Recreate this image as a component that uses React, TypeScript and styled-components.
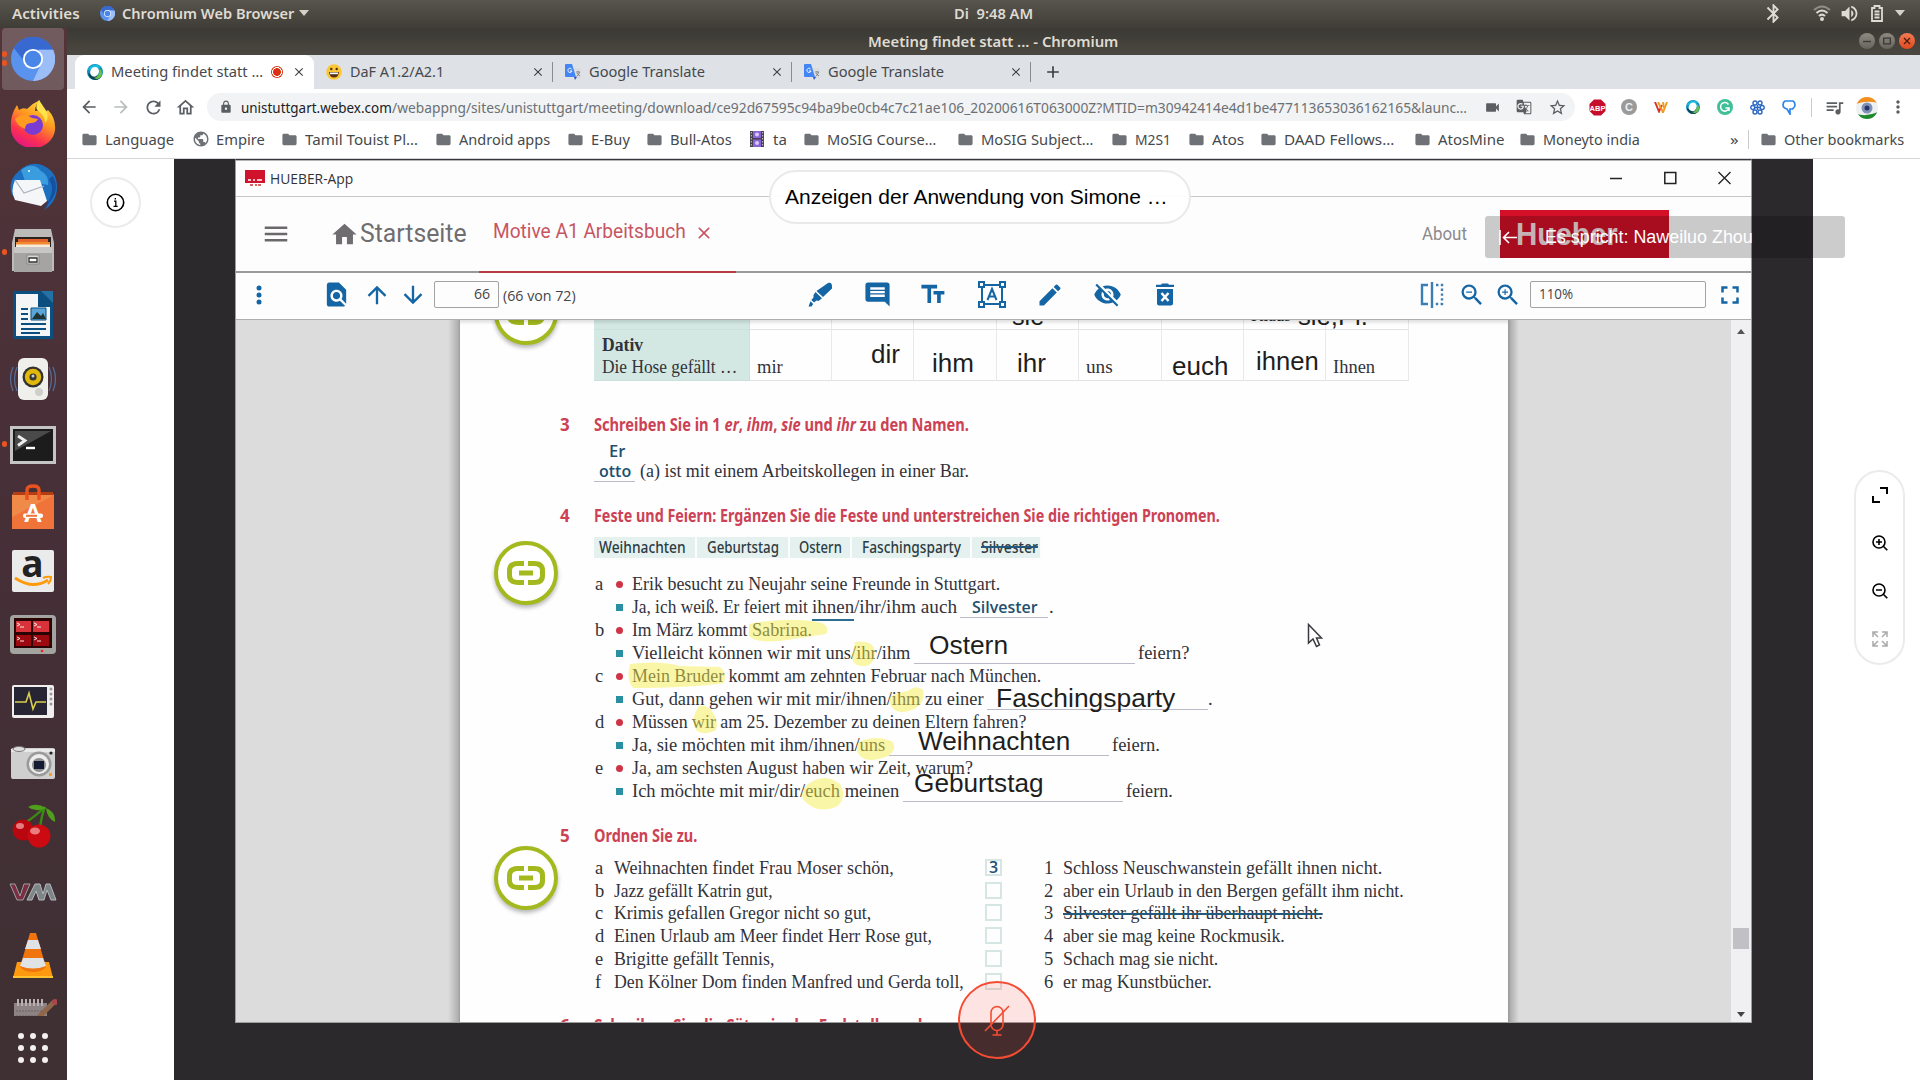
import React, { useLayoutEffect, useRef, useState, ReactNode } from 'react';
import styled, { createGlobalStyle, css } from 'styled-components';
import {
  MdHome, MdFolder, MdMenu, MdFormatSize, MdEdit, MdVisibilityOff, MdZoomOut, MdZoomIn,
  MdFullscreen, MdFindInPage, MdArrowUpward, MdArrowDownward, MdLock, MdVideocam, MdGTranslate, MdStarBorder,
  MdQueueMusic, MdPublic, MdBluetooth, MdVolumeUp, MdInsertComment, MdArrowBack, MdArrowForward, MdRefresh,
  MdOutlineHome, MdMoreVert, MdClose, MdAdd,
} from 'react-icons/md';

const ui = `'Noto Sans', 'Open Sans', sans-serif`;
const sans = `'Liberation Sans', Arial, sans-serif`;
const serif = `'Liberation Serif', 'Times New Roman', serif`;
const roboto = `Roboto, 'Liberation Sans', sans-serif`;

const Global = createGlobalStyle`
  * { box-sizing: border-box; }
  html, body { margin: 0; padding: 0; overflow: hidden; background: #fff; }
  svg { display: block; flex: none; }
`;

/* ---------- text squeezed or stretched to a set width ---------- */
const FitBox = styled.span<{ $w: number }>`
  display: inline-block;
  flex: none;
  width: ${p => p.$w}px;
  white-space: pre;
`;
const FitInner = styled.span`
  display: inline-block;
  transform-origin: 0 0;
  white-space: pre;
`;
function Fit({ w, children }: { w: number; children: ReactNode }) {
  const ref = useRef<HTMLSpanElement>(null);
  const [k, setK] = useState(1);
  useLayoutEffect(() => {
    const n = ref.current ? ref.current.offsetWidth : 0;
    if (n) setK(w / n);
  }, [w]);
  return (
    <FitBox $w={w}>
      <FitInner ref={ref} style={{ transform: `scaleX(${k})` }}>{children}</FitInner>
    </FitBox>
  );
}

/* ---------- desktop frame ---------- */
const Desktop = styled.div`
  position: relative;
  width: 1920px;
  height: 1080px;
  overflow: hidden;
  display: grid;
  grid-template: 28px 1052px / 67px 1853px;
  font-family: ${ui};
`;
const TopBar = styled.header`
  grid-column: 1 / 3;
  display: grid;
  grid-template-columns: 954px 1fr auto;
  align-items: center;
  padding-bottom: 2px;
  background: linear-gradient(#58554d, #3f3d37);
  color: #dfdbd2;
  font-size: 14.5px;
  font-weight: 600;
  line-height: 26px;
`;
const TopLeft = styled.div`
  display: flex;
  align-items: center;
  padding-left: 12px;
`;
const AppMenu = styled.div`
  display: flex;
  align-items: center;
  gap: 7px;
  margin-left: 20px;
`;
const Caret = styled.i`
  border: 5px solid transparent;
  border-top: 6px solid #d6d2c9;
  border-bottom: 0;
  margin-left: -2px;
`;
const Tray = styled.div`
  display: flex;
  align-items: center;
  padding-right: 15px;
  color: #dfdbd2;
`;
const TrayItem = styled.span<{ $ml?: number }>`
  display: flex;
  margin-left: ${p => p.$ml || 0}px;
`;

/* ---------- dock ---------- */
const Dock = styled.nav`
  position: relative;
  display: flex;
  flex-direction: column;
  background: linear-gradient(#523539, #472f38 45%, #3e3033);
`;
const DockList = styled.div`
  height: 988px;
  overflow: hidden;
  display: flex;
  flex-direction: column;
`;
const DockItem = styled.div<{ $active?: boolean; $dots?: number }>`
  flex: none;
  position: relative;
  width: 62px;
  height: 62px;
  margin: 0 0 2px 2px;
  display: grid;
  place-items: center;
  border-radius: 4px;
  background: ${p => (p.$active ? 'rgba(255,255,255,.19)' : 'none')};
  ${p => p.$dots && css`
    &::before {
      content: '';
      position: absolute;
      left: 0;
      top: ${p.$dots === 2 ? 23 : 29}px;
      width: 5px;
      height: 6px;
      border-radius: 3px;
      background: #e95420;
      box-shadow: ${p.$dots === 2 ? '0 9px #e95420' : 'none'};
    }
  `}
`;
const AppsGrid = styled.div`
  display: grid;
  grid-template-columns: repeat(3, 6px);
  gap: 6px;
  margin: 17px 0 0 18px;
`;
const AppsDot = styled.i`
  width: 6px;
  height: 6px;
  border-radius: 50%;
  background: #f4f0ee;
`;

/* ---------- browser ---------- */
const Browser = styled.section`
  display: flex;
  flex-direction: column;
  background: #fff;
`;
const TitleBar = styled.div`
  height: 27px;
  display: flex;
  align-items: center;
  background: linear-gradient(#3b3933, #4a4841);
  color: #dfdbd2;
  font-size: 14.5px;
  font-weight: 600;
  line-height: 24px;
  padding: 0 5px 2px 801px;
`;
const WinButtons = styled.div`
  margin-left: auto;
  display: flex;
  gap: 4px;
`;
const WinButton = styled.span<{ $close?: boolean }>`
  width: 16px;
  height: 16px;
  border-radius: 50%;
  display: grid;
  place-items: center;
  background: ${p => (p.$close ? 'linear-gradient(#f47b55, #e0491c)' : 'linear-gradient(#8d8a82, #66645d)')};
`;
const TabStrip = styled.div`
  height: 34px;
  display: flex;
  padding-left: 8px;
  background: #dee1e6;
`;
const Tab = styled.div<{ $active?: boolean; $sep?: boolean }>`
  width: 239px;
  display: flex;
  align-items: center;
  padding: 0 0 1px 12px;
  gap: 8px;
  color: #45494d;
  font-size: 15px;
  line-height: 32px;
  background: ${p => (p.$active ? '#fff' : 'none')};
  border-radius: ${p => (p.$active ? '9px 9px 0 0' : 0)};
  ${p => p.$sep && css`
    background: linear-gradient(#888c91, #888c91) right 0 top 7px / 1px 20px no-repeat;
  `}
`;
const TabText = styled.span`
  margin-top: -2px;
`;
const TabClose = styled.span`
  margin-left: auto;
  margin-right: 8px;
  color: #3f4347;
`;
const Record = styled.i`
  width: 12px;
  height: 12px;
  border-radius: 50%;
  background: radial-gradient(circle, #d93111 0 3.6px, #fff 4.1px 4.7px, #d93111 5.2px);
`;
const NewTab = styled.span`
  display: flex;
  align-items: center;
  padding: 0 0 1px 12px;
  color: #3c4043;
`;
const NavBar = styled.div`
  height: 36px;
  display: flex;
  align-items: center;
  padding-left: 12px;
`;
const NavButton = styled.span<{ $off?: boolean }>`
  width: 20px;
  margin-right: 12px;
  color: ${p => (p.$off ? '#babcbe' : '#5a5e62')};
`;
const Address = styled.div`
  width: 1368px;
  height: 28px;
  display: flex;
  align-items: center;
  border-radius: 14px;
  background: #f1f3f4;
  font-size: 14.5px;
  line-height: 26px;
  color: #6c7075;
  padding-left: 12px;
`;
const Domain = styled.span`
  color: #202124;
  margin-left: 8px;
`;
const AddressIcon = styled.span`
  width: 16px;
  margin-right: 16px;
  color: #5a5e62;
  display: grid;
  place-items: center;
  position: relative;
  left: 5px;
`;
const Extension = styled.span`
  width: 20px;
  height: 20px;
  margin-left: 12px;
  display: grid;
  place-items: center;
  color: #5a5e62;
`;
const Rule = styled.i<{ $ml: number }>`
  width: 1px;
  height: 19px;
  margin-left: ${p => p.$ml}px;
  background: #c8cacd;
`;
const Bookmarks = styled.div`
  height: 34px;
  display: flex;
  align-items: center;
  padding: 0 0 5px 14px;
  border-bottom: 1px solid #d3d5d8;
  font-size: 15px;
  line-height: 28px;
  color: #45494d;
`;
const Bookmark = styled.div<{ $slot: number; $ml?: number }>`
  flex: none;
  width: ${p => p.$slot}px;
  margin-left: ${p => p.$ml || 0}px;
  display: flex;
  align-items: center;
`;
const BookmarkIcon = styled.span`
  width: 15px;
  margin-right: 9px;
  display: grid;
  place-items: center;
  color: #6e7276;
`;

/* ---------- shared stage ---------- */
const Stage = styled.main`
  flex: 1;
  display: flex;
  padding-left: 107px;
`;
const Dark = styled.div`
  width: 1639px;
  background: #2b292c;
  padding-left: 61px;
`;
const AppWindow = styled.div`
  width: 1517px;
  height: 864px;
  display: flex;
  flex-direction: column;
  background: #fefdfe;
  border: 1px solid #9d9d9f;
  border-top-color: #38363a;
`;
const AppTitle = styled.div`
  height: 37px;
  display: flex;
  align-items: center;
  padding: 0 20px 1px 9px;
  border-top: 1px solid #b4b3b6;
  border-bottom: 1px solid #c6c5c7;
  font: 15px 'Open Sans', sans-serif;
  color: #333;
`;
const AppTitleText = styled.span`
  margin-left: 5px;
`;
const Spacer = styled.i`
  flex: 1;
`;
const AppWinButtons = styled.div`
  display: flex;
  gap: 41px;
`;
const AppHeader = styled.div`
  height: 76px;
  display: flex;
  align-items: center;
  border-bottom: 2px solid #9b9a9b;
  font-family: ${roboto};
  padding-left: 25px;
`;
const MenuBtn = styled.span`
  color: #6a686b;
`;
const HomeLink = styled.span`
  display: flex;
  align-items: center;
  margin-left: 39px;
  color: #6f6d70;
  font-size: 25px;
  line-height: 30px;
`;
const HomeText = styled.span`
  margin-left: 1px;
`;
const BookTab = styled.div`
  align-self: flex-start;
  height: 76px;
  width: 257px;
  margin-left: 12px;
  padding: 0 0 5px 14px;
  display: flex;
  align-items: center;
  border-bottom: 2px solid #b83a45;
  color: #c65563;
  font-size: 19.5px;
`;
const BookTabClose = styled.span`
  margin-left: 8px;
  padding-top: 2px;
`;
const About = styled.span`
  margin: 0 0 2px auto;
  color: #8a898b;
  font-size: 18px;
`;
const Logo = styled.div`
  width: 169px;
  height: 48px;
  margin: 0 82px 0 33px;
  padding-left: 16px;
  background: #d31027;
  color: #f6dfe2;
  font: bold 31px/50px ${sans};
`;
const ToolBar = styled.div`
  height: 47px;
  display: flex;
  align-items: center;
  padding-bottom: 3px;
  border-bottom: 1px solid #aeadaf;
  font: 15px 'Open Sans', sans-serif;
  color: #454447;
`;
const Tool = styled.span<{ $gap: number; $w: number; $flip?: boolean }>`
  flex: none;
  width: ${p => p.$w}px;
  margin-left: ${p => p.$gap}px;
  display: flex;
  justify-content: center;
  color: #1465a4;
  transform: ${p => (p.$flip ? 'scaleX(-1)' : 'none')};
`;
const Field = styled.span<{ $w: number; $gap: number; $right?: boolean }>`
  flex: none;
  width: ${p => p.$w}px;
  height: 27px;
  margin-left: ${p => p.$gap}px;
  padding: 0 8px;
  border: 1.5px solid #a3a2a4;
  border-radius: 2px;
  line-height: 23px;
  text-align: ${p => (p.$right ? 'right' : 'left')};
`;
const PageCount = styled.span`
  margin-left: 4px;
`;

/* ---------- document viewer ---------- */
const Viewer = styled.div`
  flex: 1;
  min-height: 0;
  display: flex;
  background: #dcdcdc;
`;
const Gutter = styled.div`
  width: 224px;
  background: linear-gradient(90deg, #dcdcdc 212px, #b0b0b0 222px, #9b9b9b);
`;
const GutterRight = styled.div`
  width: 223px;
  background: linear-gradient(90deg, #999 0, #b2b2b2 3px, #dcdcdc 11px);
`;
const Scroll = styled.div`
  width: 20px;
  display: flex;
  flex-direction: column;
  align-items: center;
  background: #f0eff2;
`;
const ScrollArrow = styled.i<{ $up?: boolean; $mt: number }>`
  margin-top: ${p => p.$mt}px;
  border: 4px solid transparent;
  ${p => (p.$up ? 'border-bottom: 5px solid #555; border-top: 0;' : 'border-top: 5px solid #444; border-bottom: 0;')}
`;
const Thumb = styled.i`
  width: 16px;
  height: 21px;
  margin-top: 594px;
  background: #c1c0c5;
`;
const Page = styled.article`
  position: relative;
  width: 1048px;
  overflow: hidden;
  background: #fefefe;
  padding-left: 134px;
  font-family: ${serif};
  font-size: 18.5px;
  color: #32323a;
`;
const TopShade = styled.div`
  position: absolute;
  inset: 0 0 auto 0;
  height: 5px;
  background: linear-gradient(rgba(0, 0, 0, .12), transparent);
`;
const Table = styled.div`
  display: grid;
  grid-template-columns: 156px 82px 82px 83px 82px 82.500px 82px 82.500px 82.500px;
  grid-template-rows: 10px 51px;
  height: 61px;
`;
const Cell = styled.div<{ $head?: boolean; $top?: boolean }>`
  border-right: 1px solid #e9e9ec;
  border-bottom: 1px solid #e1e4e6;
  padding-left: ${p => (p.$head ? 8 : 7)}px;
  padding-top: ${p => (p.$top ? 0 : p.$head ? 4 : 26)}px;
  line-height: 22px;
  white-space: nowrap;
  ${p => p.$head && css`
    background: #d3e8e2;
    border-color: #cce0db;
  `}
`;
const Bold = styled.div`
  font-weight: bold;
`;
const Heading = styled.h2<{ $mt: number }>`
  display: flex;
  height: 24px;
  margin: ${p => p.$mt}px 0 0 -34px;
  font: bold 17px/24px ${ui};
  color: #cc4254;
  white-space: nowrap;
`;
const Num = styled.span`
  width: 34px;
`;
const Hand = styled.span`
  font: 600 15.5px/22px 'Open Sans', sans-serif;
  color: #21506f;
`;
const BoxHand = styled(Hand)`
  line-height: 12px;
  font-size: 16px;
  height: 13px;
`;
const HandRow = styled.div`
  height: 22.5px;
  padding: 2.5px 0 0 15px;
  line-height: 20px;
`;
const Line = styled.div`
  height: 22.97px;
  line-height: 23px;
  white-space: nowrap;
  display: flex;
  align-items: baseline;
`;
const Letter = styled.span<{ $w: number }>`
  width: ${p => p.$w}px;
  padding-left: 1px;
`;
const Bullet = styled.i<{ $square?: boolean }>`
  width: 7px;
  height: 7px;
  margin-right: 9px;
  transform: translateY(-2px);
  border-radius: ${p => (p.$square ? 0 : '50%')};
  background: ${p => (p.$square ? '#2a8fa0' : '#cf3346')};
`;
const Blank = styled.span<{ $w: number; $l?: number; $r?: number }>`
  width: ${p => p.$w}px;
  height: 22px;
  align-self: flex-start;
  margin: 0 ${p => p.$r || 0}px 0 ${p => p.$l || 0}px;
  border-bottom: 1px solid #b9bcc8;
  text-align: center;
`;
const Under = styled.span`
  border-bottom: 2px solid #2c6d92;
`;
const Strike = styled.span`
  text-decoration: line-through;
  text-decoration-color: #24587c;
  text-decoration-thickness: 2px;
`;
const Chips = styled.div`
  display: flex;
  width: 448px;
  height: 21px;
  margin: 9px 0 15.4px;
  font: 500 15.5px/20px ${ui};
  color: #2c3c44;
`;
const Chip = styled.span<{ $w: number; $pl: number }>`
  width: ${p => p.$w}px;
  padding-left: ${p => p.$pl}px;
  background: #e5f1ee;
  border-right: 2px solid #fbfdfd;
`;
const MatchGrid = styled.div`
  display: grid;
  grid-template-columns: 391px 58px 1fr;
  grid-auto-rows: 22.96px;
  margin-top: 8.500px;
`;
const Box = styled.span`
  width: 17px;
  height: 17px;
  margin-top: 2px;
  border: 2px solid #d6e6e4;
  display: grid;
  place-items: center;
`;
const Note = styled.span<{ $x: number; $y: number }>`
  position: absolute;
  left: ${p => p.$x}px;
  top: ${p => p.$y}px;
  font: 26px/30px ${sans};
  color: #1e1e20;
`;
const SmallNote = styled(Note)`
  font: 18px/30px ${serif};
`;
const Marks = styled.svg`
  position: absolute;
  left: 0;
  top: 0;
`;
const LinkBadge = styled.span<{ $y: number }>`
  position: absolute;
  left: 34px;
  top: ${p => p.$y}px;
  width: 64px;
  height: 64px;
  border-radius: 50%;
  border: 4.5px solid #a4b91e;
  background: #fff;
  display: grid;
  place-items: center;
  box-shadow: 0 3px 4px rgba(0, 0, 0, .28);
`;
const Pointer = styled.svg`
  position: absolute;
  left: 847px;
  top: 303px;
`;

/* ---------- meeting overlays ---------- */
const InfoButton = styled.button`
  position: absolute;
  left: 90px;
  top: 177px;
  width: 51px;
  height: 51px;
  padding: 0;
  border: 2px solid #ebebeb;
  border-radius: 50%;
  background: #fff;
  display: grid;
  place-items: center;
`;
const SharePill = styled.div`
  position: absolute;
  left: 769px;
  top: 170px;
  width: 422px;
  height: 54px;
  padding-left: 14px;
  border: 2px solid #e9e9e9;
  border-radius: 27px;
  background: rgba(255, 255, 255, .95);
  font: 20.5px/50px ${sans};
  color: #000;
`;
const Speaking = styled.div`
  position: absolute;
  left: 1485px;
  top: 216px;
  width: 360px;
  height: 42px;
  display: flex;
  align-items: center;
  gap: 28px;
  padding-left: 14px;
  border-radius: 3px;
  background: rgba(0, 0, 0, .2);
  font: 19px/42px ${sans};
  color: #fff;
`;
const ViewPill = styled.div`
  position: absolute;
  left: 1854px;
  top: 470px;
  width: 51px;
  height: 195px;
  padding-top: 15px;
  display: flex;
  flex-direction: column;
  align-items: center;
  gap: 32px;
  border: 2px solid #ebebeb;
  border-radius: 26px;
  background: #fff;
`;
const MicButton = styled.button`
  position: absolute;
  left: 958px;
  top: 981px;
  width: 78px;
  height: 78px;
  padding: 0;
  border: 2px solid #f64c34;
  border-radius: 50%;
  background: rgba(248, 66, 58, .14);
  display: grid;
  place-items: center;
`;

/* ---------- drawings ---------- */
const Chromium = ({ s }: { s: number }) => (
  <svg width={s} height={s} viewBox="0 0 48 48">
    <circle cx="24" cy="24" r="24" fill="#5a93ee" />
    <path d="M3 12A24 24 0 0 1 46 14H24A10 10 0 0 0 14 26Z" fill="#3869d1" />
    <path d="M46 14A24 24 0 0 1 24 48L33 29Q36 20 30 14Z" fill="#9bbdf8" />
    <circle cx="24" cy="24" r="11" fill="#fff" /><circle cx="24" cy="24" r="9" fill="#4a86e8" />
  </svg>
);
const Webex = ({ s = 16 }: { s?: number }) => (
  <svg width={s} height={s} viewBox="0 0 16 16">
    <circle cx="8" cy="8" r="8" fill="#0d8fbd" />
    <path d="M1 6A8 8 0 0 1 14 3L9 5Z" fill="#19bbe0" />
    <path d="M1 9Q2 15 8 16 13 16 15 11L8 12Z" fill="#0a4454" />
    <path d="M7 14Q13 13 12.500 4 17 9 13.500 13.500 11 16 7 14Z" fill="#6cc04a" />
    <ellipse cx="7.600" cy="7.800" rx="4.300" ry="5" transform="rotate(25 7.600 7.800)" fill="#fff" />
  </svg>
);
const Smile = () => (
  <svg width="16" height="16" viewBox="0 0 16 16">
    <circle cx="8" cy="8" r="7.8" fill="#fcc737" /><path d="M3 8h10q-.5 5.500-5 5.500T3 8Z" fill="#533116" />
    <path d="M4 8.500h8v1.700H4Z" fill="#fff" /><circle cx="5.300" cy="5" r="1.200" fill="#533116" /><circle cx="10.700" cy="5" r="1.200" fill="#533116" />
  </svg>
);
const GTrans = () => (
  <svg width="16" height="16" viewBox="0 0 16 16">
    <path d="M6 4h9a1 1 0 0 1 1 1v10H10Z" fill="#dadce0" /><path d="M9 13h3l-2 3Z" fill="#3454c4" />
    <path d="M1 0h6l4 13H1a1 1 0 0 1-1-1V1a1 1 0 0 1 1-1Z" fill="#4285f4" />
    <path d="M6.800 5.300A2.100 2.100 0 1 0 7 7H5" fill="none" stroke="#fff" strokeWidth="1" />
    <path d="M11 8h4M13 7v1m1.500 0q-.5 3-3 4.500M12 9q1 2 3 3" stroke="#777" strokeWidth=".8" fill="none" />
  </svg>
);
const Film = () => (
  <svg width="14" height="16" viewBox="0 0 14 16">
    <path d="M0 0h14v16H0Z" fill="#46424e" /><path d="M3 0h8v7H3Zm0 8.500h8V16H3Z" fill="#8a63d8" />
    <circle cx="7" cy="3.500" r="2" fill="#d9c9fa" /><circle cx="7" cy="12" r="2" fill="#d9c9fa" />
    <path d="M1.300 1v15M12.700 1v15" stroke="#ccc" strokeDasharray="1.500 1.500" />
  </svg>
);
const Wifi = () => (
  <svg width="18" height="16" viewBox="0 0 18 16" fill="none" stroke="#dfdbd2" strokeWidth="2">
    <path d="M1 5q8-7 16 0" opacity=".45" /><path d="M3.500 8q5.500-5 11 0M6 11q3-2.800 6 0" /><circle cx="9" cy="14" r="1" fill="#dfdbd2" />
  </svg>
);
const Battery = () => (
  <svg width="12" height="17" viewBox="0 0 12 17"><path d="M1 3h2.500V1h5v2H11v13H1ZM3.500 6.500h5m-5 3h5m-5 3h5" fill="none" stroke="#dfdbd2" strokeWidth="1.800" /></svg>
);
const ScreenFile = () => (
  <svg width="20" height="17" viewBox="0 0 20 17"><path d="M0 0h20v13H0Z" fill="#d0122c" /><path d="M3 10h3m2 0h2m2 0h5" stroke="#fff" strokeWidth="1.400" /><path d="M5 15h3m2 0h2m1 0h3" stroke="#c33" strokeWidth="1.600" /></svg>
);
const LinkShape = () => (
  <svg width="38" height="24" viewBox="0 0 38 24" fill="none" stroke="#a4b91e" strokeWidth="5">
    <path d="M17 2.500H11Q2.500 2.500 2.500 9.500V14.500Q2.500 21.500 11 21.500H17M21 2.500H27Q35.500 2.500 35.500 9.500V14.500Q35.500 21.500 27 21.500H21M12 12H26" />
  </svg>
);
const Marker = () => (
  <svg width="25" height="25" viewBox="0 0 25 25" fill="#1465a4">
    <path d="M20 1q4-1.500 4 3.500v2L15 15 8.500 9ZM7.500 10l6.500 6.200L10.500 19 8.500 18.500 6 20.500 3.300 18 5.500 15.500V13ZM2.500 19.300 5.200 22 3.500 24.500H.5Z" />
  </svg>
);
const TextBox = () => (
  <svg width="28" height="27" viewBox="0 0 28 27" fill="none" stroke="#1465a4" strokeWidth="2">
    <path d="M4 4h20v19H4Z" /><path d="M1 1h5v5H1ZM22 1h5v5h-5ZM1 21h5v5H1ZM22 21h5v5h-5Z" fill="#fff" />
    <path d="M9.500 19 14 8l4.500 11M11 15.500h6" />
  </svg>
);
const TrashX = () => (
  <svg width="18" height="23" viewBox="0 0 18 23"><path d="M1 6h16v14.500a2 2 0 0 1-2 2H3a2 2 0 0 1-2-2ZM0 1.800h5L6 .5h6l1 1.300h5V4H0Z" fill="#1465a4" /><path d="m5.500 10 7 8m0-8-7 8" stroke="#fff" strokeWidth="2.500" /></svg>
);
const BookSplit = () => (
  <svg width="24" height="26" viewBox="0 0 24 26" fill="none" stroke="#3b7eb3" strokeWidth="2.400">
    <path d="M8 3H2v19h6M12 0v26" /><path d="M16 3h6v19h-7" strokeDasharray="2.400 2.400" />
  </svg>
);

const DockSvg = ({ children }: { children: ReactNode }) => (
  <svg width="48" height="48" viewBox="0 0 48 48">{children}</svg>
);
const Firefox = () => (
  <DockSvg>
    <defs><linearGradient id="ff" x1=".8" y1="0" x2=".3" y2="1"><stop offset="0" stopColor="#ffe83e" /><stop offset=".4" stopColor="#ff9a1f" /><stop offset=".75" stopColor="#fb3150" /><stop offset="1" stopColor="#e31587" /></linearGradient></defs>
    <path d="M31 1q-5 5-5 11 3-1 8 3l5-4q8 8 7 20A22 20 0 0 1 2 27Q1 17 8 6l2 5q4-3 8-1Q24 4 31 1Z" fill="url(#ff)" />
    <circle cx="24" cy="26" r="10" fill="#7a3bd3" /><path d="M6 20q8-8 17-1l6 1q-2 4-7 4-6 0-6 6Q8 27 6 20Z" fill="#ff9b20" />
    <path d="M30 1q-5 7-1 11 7 4 7 12 4-4 2-11Z" fill="#ffe34a" />
  </DockSvg>
);
const Thunderbird = () => (
  <DockSvg>
    <path d="M10 8Q20-2 33 2q15 6 15 22 0 15-13 23 5-5 4-9L3 32Q-2 18 10 8Z" fill="#1d6fc0" />
    <path d="M12 7Q24-2 32 8q8 4 7 14L16 18Z" fill="#3a9de0" />
    <path d="M6 17 31 17 38 38 32 43 6 37Q1 28 6 17Z" fill="#f4f6f8" /><path d="M6 17 15 30 35 23" fill="none" stroke="#aab4c0" strokeWidth="1.200" />
    <path d="M40 16q8 12-5 29 18-15 9-32Z" fill="#1451a0" /><circle cx="20" cy="8" r="1" fill="#fff" />
  </DockSvg>
);
const Files = () => (
  <DockSvg>
    <path d="M6 2h36l3 14v28H3V16Z" fill="#bdbbb8" /><path d="M6 10h36v11H6Z" fill="#2a221e" /><path d="M9 12h30v8H9Z" fill="#e2642a" /><path d="M7 16h34v5H7Z" fill="#f7ead8" /><path d="M7 15h34v2.500H7Z" fill="#f28a30" />
    <path d="M5 20h38v25H5Z" fill="#a5a4a3" /><path d="M5 20h38v6H5Z" fill="#c7c6c5" /><path d="M18 28h12v9H18Z" fill="#d9d8d7" stroke="#888" /><path d="M20 31h8v4h-8Z" fill="#fff" stroke="#333" strokeWidth="1.300" />
  </DockSvg>
);
const Writer = () => (
  <DockSvg>
    <path d="M4 0h28l12 12v36H4Z" fill="#0b4f80" /><path d="M32 0h12v12Z" fill="#2272a8" /><path d="M7 3h22v13h12v29H7Z" fill="#f3f5f6" />
    <path d="M12 18h7m-7 5h7m-7 5h7m-7 5h25m-25 5h25m-25 4h19" stroke="#0b4f80" strokeWidth="2" /><path d="M22 17h15v12H22Z" fill="#5aa6d8" stroke="#0b4f80" /><path d="m23 28 5-7 4 4 2-3 3 6Z" fill="#233" />
  </DockSvg>
);
const Rhythm = () => (
  <DockSvg>
    <path d="M4 12q-5 12 0 24M44 12q5 12 0 24M8 12q-5 12 0 24M40 12q5 12 0 24" fill="none" stroke="#566c94" strokeWidth="1.300" />
    <rect x="9" y="3" width="30" height="42" rx="6" fill="#efefec" /><circle cx="24" cy="22" r="10.500" fill="#33322e" /><circle cx="24" cy="22" r="8.200" fill="#e0b90c" /><circle cx="24" cy="22" r="3.600" fill="#3a3936" /><circle cx="24" cy="21" r="1.500" fill="#ccc" /><circle cx="30" cy="37" r="4" fill="#cfcfca" />
  </DockSvg>
);
const Terminal = () => (
  <DockSvg><path d="M1 7h46v38H1Z" fill="#c4c4c4" /><path d="M4 10h40v32H4Z" fill="#1c1c1c" /><path d="M6 12h36L6 32Z" fill="#4a4a4a" /><path d="m9 17 7 4.500-7 5" fill="none" stroke="#eee" strokeWidth="2.800" /><path d="M17 29h9" stroke="#fff" strokeWidth="2.400" /></DockSvg>
);
const Software = () => (
  <DockSvg>
    <path d="m3 12 3-3h37l2 3v34H3Z" fill="#f0743a" /><path d="M4 9h40v4H4Z" fill="#b63c12" /><path d="M3 12h42L3 34Z" fill="#f08a48" /><path d="M18 17V7q0-4 6-4t6 4v10" fill="none" stroke="#e8521e" strokeWidth="3.400" />
    <text x="24" y="39" textAnchor="middle" fontFamily="Lato" fontWeight="900" fontSize="24" fill="#fff">A</text><rect x="14" y="30.500" width="20" height="4.600" rx="2" fill="#fff" /><path d="M17 32.800h11" stroke="#f0743a" strokeWidth="2" />
  </DockSvg>
);
const Amazon = () => (
  <DockSvg>
    <rect x="3" y="3" width="42" height="42" rx="2" fill="#ebebec" /><text x="23.500" y="30" textAnchor="middle" fontFamily="Open Sans" fontWeight="700" fontSize="37" fill="#222">a</text>
    <path d="M6 31q18 12 33 2" fill="none" stroke="#ff9a0b" strokeWidth="2.800" /><path d="M34 31q4-2 8-1-0 4-3 7" fill="none" stroke="#ff9a0b" strokeWidth="2" />
  </DockSvg>
);
const Terminator = () => (
  <DockSvg>
    <rect x="1" y="4" width="46" height="39" rx="4" fill="#a3a49f" /><path d="M5 7h38v30H5Z" fill="#2a0405" /><path d="M7 10h15v11H7Zm17 0h16v11H24Z" fill="#d8323a" /><path d="M7 24h15v11H7Zm17 0h16v11H24Z" fill="#9c0a10" />
    <path d="m8 12 3 1.500-3 1.500m3 1h4m10-4 3 1.500-3 1.500m3 1h4M8 26l3 1.500L8 29m3 1h4m10-4 3 1.500-3 1.500m3 1h4" fill="none" stroke="#fff" strokeWidth=".9" /><circle cx="33" cy="40" r="1.300" fill="#e22" />
  </DockSvg>
);
const Monitor = () => (
  <DockSvg><rect x="3" y="10" width="42" height="33" rx="2" fill="#f0efee" /><path d="M5 12h33v28H5Z" fill="#272433" /><path d="M6 27h11l3-9 4 16 3-7h10" fill="none" stroke="#d7cf4a" strokeWidth="1.600" /><circle cx="42" cy="14" r="1.500" fill="#999" /><circle cx="42" cy="19" r="1.500" fill="#999" /><circle cx="42" cy="24" r="1.500" fill="#999" /><circle cx="42" cy="29" r="1.500" fill="#999" /></DockSvg>
);
const Camera = () => (
  <DockSvg><rect x="2" y="9" width="44" height="31" rx="2" fill="#cfcfcf" /><path d="M2 13h44v-3H2Z" fill="#e9e9e9" /><ellipse cx="10" cy="10" rx="6" ry="2.500" fill="#ddd" stroke="#777" /><circle cx="30" cy="25" r="12.500" fill="#9a9a9a" /><circle cx="30" cy="25" r="10" fill="#ededed" /><circle cx="30" cy="26" r="7" fill="#8d8d8d" /><rect x="25" y="22" width="10" height="8" fill="#131a33" /><circle cx="42" cy="14" r="1.600" fill="#222" /><path d="M40 34h3v3h-3Z" fill="#f3a12c" /></DockSvg>
);
const Cherry = () => (
  <DockSvg>
    <path d="M16 20Q28 12 36 4q-4 10-5 22" fill="none" stroke="#3b8a12" strokeWidth="2.400" /><path d="M37 5Q27-1 19 4q8 6 18 1Zm0 0q10 4 9 14-8-4-9-14Z" fill="#4f9f1b" />
    <circle cx="14" cy="27" r="10.500" fill="#b9070f" /><circle cx="30" cy="33" r="11.500" fill="#cb0a12" /><ellipse cx="11" cy="23" rx="4" ry="3" fill="#f29a9a" opacity=".8" /><ellipse cx="26" cy="28" rx="5" ry="3.500" fill="#f29a9a" opacity=".8" />
  </DockSvg>
);
const Vmm = () => (
  <DockSvg>
    <path d="M1 17h5l5 12 4-12h6l-7 16H8Z" fill="#7d2d43" stroke="#9aa0a3" strokeWidth="1" />
    <path d="m18 33 8-16h5l3 10 3-10h4l6 16h-5l-4-10-3 10h-5l-3-9-4 9Z" fill="#7e8588" stroke="#b3b8ba" strokeWidth="1" />
  </DockSvg>
);
const Vlc = () => (
  <DockSvg>
    <path d="M8 31h32l4 16H4Z" fill="#ff9a10" /><path d="M4 45h40v2H4Z" fill="#ffc32e" /><path d="m21 2h6l10 34q-4 5-13 5t-13-5Z" fill="#f0750f" /><path d="M19 9h10l3 9H16Zm-5 18h20l3 8q-13 5-26 0Z" fill="#dfe3e6" />
  </DockSvg>
);
const Notes = () => (
  <DockSvg><path d="M5 8h33v30H5Z" fill="#8d8385" /><path d="M7 16h28M7 21h28" stroke="#6d6365" strokeDasharray="2 1" /><path d="M9 4v7m4-7v7m4-7v7m4-7v7m4-7v7m4-7v7m4-7v7" stroke="#b8b0b2" strokeWidth="2" /><path d="m45 7-15 15" stroke="#8f6648" strokeWidth="5" /><circle cx="46" cy="7" r="3" fill="#a8474b" /></DockSvg>
);

const dock: { icon: ReactNode; dots?: number; active?: boolean }[] = [
  { icon: <Chromium s={44} />, dots: 2, active: true }, { icon: <Firefox /> }, { icon: <Thunderbird /> }, { icon: <Files />, dots: 1 },
  { icon: <Writer /> }, { icon: <Rhythm /> }, { icon: <Terminal />, dots: 1 }, { icon: <Software /> }, { icon: <Amazon /> },
  { icon: <Terminator /> }, { icon: <Monitor /> }, { icon: <Camera /> }, { icon: <Cherry /> }, { icon: <Vmm /> }, { icon: <Vlc /> }, { icon: <Notes /> },
];

const bookmarks: [string, number, number, ReactNode?][] = [
  ['Language', 69, 111], ['Empire', 49, 89, <MdPublic size={18} />], ['Tamil Touist Pl…', 113, 154], ['Android apps', 91, 132],
  ['E-Buy', 39, 79], ['Bull-Atos', 62, 103], ['ta', 14, 54, <Film />], ['MoSIG Course…', 109, 154], ['MoSIG Subject…', 112, 154],
  ['M2S1', 36, 77], ['Atos', 32, 72], ['DAAD Fellows…', 110, 154], ['AtosMine', 66, 105], ['Moneyto india', 97, 211],
];

const matches: [string, string, number, string, number][] = [
  ['a', 'Weihnachten findet Frau Moser schön,', 280, 'Schloss Neuschwanstein gefällt ihnen nicht.', 319],
  ['b', 'Jazz gefällt Katrin gut,', 159, 'aber ein Urlaub in den Bergen gefällt ihm nicht.', 341],
  ['c', 'Krimis gefallen Gregor nicht so gut,', 257, 'Silvester gefällt ihr überhaupt nicht.', 260],
  ['d', 'Einen Urlaub am Meer findet Herr Rose gut,', 318, 'aber sie mag keine Rockmusik.', 222],
  ['e', 'Brigitte gefällt Tennis,', 160, 'Schach mag sie nicht.', 155],
  ['f', 'Den Kölner Dom finden Manfred und Gerda toll,', 350, 'er mag Kunstbücher.', 149],
];

const notes: [string, number, number, number][] = [
  ['sie', 552, -19, 32], ['sie,Pl.', 838, -19, 70], ['dir', 411, 19, 29], ['ihm', 472, 27.5, 42], ['ihr', 557, 28, 29],
  ['euch', 712, 30.5, 56], ['ihnen', 796, 26, 63], ['Ostern', 469, 310, 79], ['Faschingsparty', 536, 363, 179],
  ['Weihnachten', 458, 406, 152], ['Geburtstag', 454, 448, 130],
];

function Q({ letter, children }: { letter?: string; children: ReactNode }) {
  return (
    <Line>
      <Letter $w={22}>{letter || ''}</Letter>
      <Bullet $square={!letter} />
      {children}
    </Line>
  );
}

function Worksheet() {
  return (
    <Page>
      <Table>
        <Cell $head $top />{[1, 2, 3, 4, 5, 6, 7, 8].map(i => <Cell key={i} $top />)}
        <Cell $head><Bold><Fit w={41}>Dativ</Fit></Bold><Fit w={135}>Die Hose gefällt …</Fit></Cell>
        <Cell><Fit w={26}>mir</Fit></Cell><Cell /><Cell /><Cell />
        <Cell><Fit w={27}>uns</Fit></Cell><Cell /><Cell /><Cell><Fit w={42}>Ihnen</Fit></Cell>
      </Table>

      <Heading $mt={32}><Num>3</Num><Fit w={375}>Schreiben Sie in 1 <em>er</em>, <em>ihm</em>, <em>sie</em> und <em>ihr</em> zu den Namen.</Fit></Heading>
      <HandRow><Hand><Fit w={16}>Er</Fit></Hand></HandRow>
      <Line><Blank $w={41} $r={5}><Hand><Fit w={32}>otto</Fit></Hand></Blank><Fit w={329}>(a) ist mit einem Arbeitskollegen in einer Bar.</Fit></Line>

      <Heading $mt={21.5}><Num>4</Num><Fit w={626}>Feste und Feiern: Ergänzen Sie die Feste und unterstreichen Sie die richtigen Pronomen.</Fit></Heading>
      <Chips>
        <Chip $w={103} $pl={5}><Fit w={87}>Weihnachten</Fit></Chip>
        <Chip $w={93} $pl={10}><Fit w={72}>Geburtstag</Fit></Chip>
        <Chip $w={62} $pl={9}><Fit w={43}>Ostern</Fit></Chip>
        <Chip $w={120} $pl={10}><Fit w={99}>Faschingsparty</Fit></Chip>
        <Chip $w={70} $pl={9}><Fit w={57}><Strike>Silvester</Strike></Fit></Chip>
      </Chips>

      <Q letter="a"><Fit w={368}>Erik besucht zu Neujahr seine Freunde in Stuttgart.</Fit></Q>
      <Q>
        <Fit w={180}>Ja, ich weiß. Er feiert mit </Fit><Under><Fit w={42}>ihnen</Fit></Under><Fit w={103}>/ihr/ihm auch</Fit>
        <Blank $w={88} $l={3} $r={1}><Hand><Fit w={66}>Silvester</Fit></Hand></Blank>.
      </Q>
      <Q letter="b"><Fit w={120}>Im März kommt </Fit><Fit w={60}>Sabrina.</Fit></Q>
      <Q><Fit w={278}>Vielleicht können wir mit uns/ihr/ihm</Fit><Blank $w={221} $l={4} $r={3} /><Fit w={51}>feiern?</Fit></Q>
      <Q letter="c"><Fit w={409}>Mein Bruder kommt am zehnten Februar nach München.</Fit></Q>
      <Q><Fit w={352}>Gut, dann gehen wir mit mir/ihnen/ihm zu einer</Fit><Blank $w={221} $l={3} />.</Q>
      <Q letter="d"><Fit w={394}>Müssen wir am 25. Dezember zu deinen Eltern fahren?</Fit></Q>
      <Q><Fit w={253}>Ja, sie möchten mit ihm/ihnen/uns</Fit><Blank $w={220} $l={4} $r={3} /><Fit w={48}>feiern.</Fit></Q>
      <Q letter="e"><Fit w={341}>Ja, am sechsten August haben wir Zeit, warum?</Fit></Q>
      <Q><Fit w={267}>Ich möchte mit mir/dir/euch meinen</Fit><Blank $w={220} $l={4} $r={3} /><Fit w={47}>feiern.</Fit></Q>

      <Heading $mt={21}><Num>5</Num><Fit w={103}>Ordnen Sie zu.</Fit></Heading>
      <MatchGrid>
        {matches.map(([l, left, lw, right, rw], i) => (
          <React.Fragment key={l}>
            <Line><Letter $w={20}>{l}</Letter><Fit w={lw}>{left}</Fit></Line>
            <Box>{i === 0 && <BoxHand>3</BoxHand>}</Box>
            <Line><Letter $w={20}>{i + 1}</Letter><Fit w={rw}>{i === 2 ? <Strike>{right}</Strike> : right}</Fit></Line>
          </React.Fragment>
        ))}
      </MatchGrid>
      <Heading $mt={20}><Num>6</Num><Fit w={345}>Schreiben Sie die Sätze in der Endstellung des</Fit></Heading>

      <Marks width="1048" height="702" viewBox="460 320 1048 702" fill="#f6ee46" fillOpacity=".47">
        <path d="M749 624Q790 616 822 623 830 627 826 634 800 638 780 641 755 643 749 636Z" />
        <path d="M855 642Q870 640 874 648 877 663 866 666 852 667 852 656Z" />
        <path d="M630 664Q660 660 680 666L720 667Q727 672 724 683 690 688 633 688 626 680 630 664Z" />
        <path d="M889 701Q888 694 908 691 916 684 923 690 926 704 912 710 893 717 889 701Z" />
        <path d="M698 707Q707 703 713 713 719 722 716 730 706 736 697 731 691 722 694 716Z" />
        <path d="M859 742Q876 734 893 742 897 750 888 756 868 764 860 756 854 748 859 742Z" />
        <path d="M808 784Q825 772 840 784 847 796 838 806 820 814 808 804 796 796 808 784Z" />
      </Marks>
      {notes.map(([t, x, y, w]) => <Note key={t} $x={x} $y={y}><Fit w={w}>{t}</Fit></Note>)}
      <SmallNote $x={791} $y={-20}><Fit w={40}>Klaus</Fit></SmallNote>
      <LinkBadge $y={-39}><LinkShape /></LinkBadge>
      <LinkBadge $y={221}><LinkShape /></LinkBadge>
      <LinkBadge $y={526}><LinkShape /></LinkBadge>
      <Pointer width="16" height="26" viewBox="0 0 16 26"><path d="M1.500 1.500V20L6 16l3.500 7.500 3-1.500L9.500 15H14.500Z" fill="#fff" stroke="#3b3a40" strokeWidth="1.500" /></Pointer>
      <TopShade />
    </Page>
  );
}

export default function App() {
  return (
    <Desktop>
      <Global />
      <TopBar>
        <TopLeft>
          <Fit w={68}>Activities</Fit>
          <AppMenu><Chromium s={15} /><Fit w={172}>Chromium Web Browser</Fit><Caret /></AppMenu>
        </TopLeft>
        <Fit w={79}>Di  9:48 AM</Fit>
        <Tray>
          <TrayItem><MdBluetooth size={23} /></TrayItem>
          <TrayItem $ml={28}><Wifi /></TrayItem>
          <TrayItem $ml={8}><MdVolumeUp size={21} /></TrayItem>
          <TrayItem $ml={11}><Battery /></TrayItem>
          <TrayItem $ml={14}><Caret /></TrayItem>
        </Tray>
      </TopBar>

      <Dock>
        <DockList>
          {dock.map((d, i) => <DockItem key={i} $dots={d.dots} $active={d.active}>{d.icon}</DockItem>)}
        </DockList>
        <AppsGrid>{Array.from({ length: 9 }, (_, i) => <AppsDot key={i} />)}</AppsGrid>
      </Dock>

      <Browser>
        <TitleBar>
          <Fit w={250}>Meeting findet statt ... - Chromium</Fit>
          <WinButtons>
            <WinButton><svg width="8" height="8"><path d="M0 4.500h8" stroke="#3b3933" strokeWidth="1.300" /></svg></WinButton>
            <WinButton><svg width="8" height="8"><path d="M.7 1.200h6.600v5.600H.7Z" fill="none" stroke="#3b3933" strokeWidth="1.300" /></svg></WinButton>
            <WinButton $close><svg width="8" height="8"><path d="m1 1 6 6m0-6L1 7" stroke="#4a1d0d" strokeWidth="1.300" /></svg></WinButton>
          </WinButtons>
        </TitleBar>
        <TabStrip>
          <Tab $active><Webex /><TabText><Fit w={152}>Meeting findet statt …</Fit></TabText><Record /><TabClose><MdClose size={14} /></TabClose></Tab>
          <Tab $sep><Smile /><TabText><Fit w={94}>DaF A1.2/A2.1</Fit></TabText><TabClose><MdClose size={14} /></TabClose></Tab>
          <Tab $sep><GTrans /><TabText><Fit w={116}>Google Translate</Fit></TabText><TabClose><MdClose size={14} /></TabClose></Tab>
          <Tab $sep><GTrans /><TabText><Fit w={116}>Google Translate</Fit></TabText><TabClose><MdClose size={14} /></TabClose></Tab>
          <NewTab><MdAdd size={20} /></NewTab>
        </TabStrip>
        <NavBar>
          <NavButton><MdArrowBack size={20} /></NavButton>
          <NavButton $off><MdArrowForward size={20} /></NavButton>
          <NavButton><MdRefresh size={21} /></NavButton>
          <NavButton><MdOutlineHome size={21} /></NavButton>
          <Address>
            <MdLock size={14} color="#5a5e62" />
            <Domain><Fit w={151}>unistuttgart.webex.com</Fit></Domain>
            <Fit w={1075}>/webappng/sites/unistuttgart/meeting/download/ce92d67595c94ba9be0cb4c7c21ae106_20200616T063000Z?MTID=m30942414e4d1be477113653036162165&amp;launc…</Fit>
            <Spacer />
            <AddressIcon><MdVideocam size={17} /></AddressIcon>
            <AddressIcon><MdGTranslate size={16} /></AddressIcon>
            <AddressIcon><MdStarBorder size={19} /></AddressIcon>
          </Address>
          <Extension><svg width="17" height="17" viewBox="0 0 17 17"><path d="M5 .5h7L16.500 5v7L12 16.500H5L.5 12V5Z" fill="#c70d2c" /><text x="8.500" y="11.500" textAnchor="middle" fontFamily="Liberation Sans" fontSize="7.500" fontWeight="bold" fill="#fff">ABP</text></svg></Extension>
          <Extension><svg width="16" height="16" viewBox="0 0 16 16"><circle cx="8" cy="8" r="8" fill="#9a9a9a" /><text x="8" y="12" textAnchor="middle" fontFamily="Liberation Sans" fontSize="11" fontWeight="bold" fill="#eee">C</text></svg></Extension>
          <Extension><svg width="14" height="11" viewBox="0 0 14 11" fill="none" strokeWidth="1.900"><path d="m1 0 4 9.500L8 3" stroke="#d93025" /><path d="M4 0l3 6" stroke="#f29a1f" /><path d="m9 0 1 6" stroke="#f29a1f" /><path d="M13 0 9 10.500 7 6" stroke="#f29a1f" /></svg></Extension>
          <Extension><Webex s={14} /></Extension>
          <Extension><svg width="16" height="16" viewBox="0 0 16 16"><circle cx="8" cy="8" r="8" fill="#3fbf97" /><path d="M11.500 5.500A4.300 4.300 0 1 0 12 9H8.500M12 8.500V12" fill="none" stroke="#fff" strokeWidth="1.500" /></svg></Extension>
          <Extension><svg width="15" height="15" viewBox="0 0 15 15" fill="none" stroke="#2b67c4" strokeWidth="1.400"><circle cx="5" cy="3" r="2" /><circle cx="10" cy="3" r="2" /><circle cx="2.800" cy="7.500" r="2" /><circle cx="12.200" cy="7.500" r="2" /><circle cx="5" cy="12" r="2" /><circle cx="10" cy="12" r="2" /><path d="M7.500 5v5M5 7.500h5" /></svg></Extension>
          <Extension><svg width="14" height="15" viewBox="0 0 14 15" fill="none" stroke="#2c84ea" strokeWidth="1.700"><path d="M3 1h8q2 1 2 4 0 2-2.500 4H8v5L5 9Q1 8 1 5 1 2 3 1Z" /></svg></Extension>
          <Rule $ml={12} />
          <Extension><MdQueueMusic size={21} /></Extension>
          <Extension><svg width="22" height="22" viewBox="0 0 22 22"><clipPath id="av"><circle cx="11" cy="11" r="11" /></clipPath><g clipPath="url(#av)"><path d="M0 0h22v22H0Z" fill="#eef0f2" /><path d="M0 0h22v6Q11 3 0 7Z" fill="#f58f1c" /><path d="M0 17q11 3 22-2v7H0Z" fill="#1f8a2b" /><circle cx="11" cy="11" r="5.500" fill="#8193b5" /><circle cx="11" cy="11" r="2.500" fill="#26346b" /></g></svg></Extension>
          <Extension><MdMoreVert size={20} /></Extension>
        </NavBar>
        <Bookmarks>
          {bookmarks.map(([label, w, slot, icon]) => (
            <Bookmark key={label} $slot={slot}><BookmarkIcon>{icon || <MdFolder size={17} />}</BookmarkIcon><Fit w={w}>{label}</Fit></Bookmark>
          ))}
          <Fit w={9}>»</Fit>
          <Rule $ml={9} />
          <Bookmark $slot={145} $ml={11}><BookmarkIcon><MdFolder size={17} /></BookmarkIcon><Fit w={120}>Other bookmarks</Fit></Bookmark>
        </Bookmarks>

        <Stage>
          <Dark>
            <AppWindow>
              <AppTitle>
                <ScreenFile />
                <AppTitleText><Fit w={83}>HUEBER-App</Fit></AppTitleText>
                <Spacer />
                <AppWinButtons>
                  <svg width="13" height="14"><path d="M0 7.500h12" stroke="#222" strokeWidth="1.500" /></svg>
                  <svg width="13" height="14"><path d="M.8 1.500h11v11H.8Z" fill="none" stroke="#222" strokeWidth="1.500" /></svg>
                  <svg width="13" height="14"><path d="m.5 1 12 12m0-12-12 12" stroke="#222" strokeWidth="1.300" /></svg>
                </AppWinButtons>
              </AppTitle>
              <AppHeader>
                <MenuBtn><MdMenu size={30} /></MenuBtn>
                <HomeLink><MdHome size={29} /><HomeText><Fit w={107}>Startseite</Fit></HomeText></HomeLink>
                <BookTab><Fit w={193}>Motive A1 Arbeitsbuch</Fit><BookTabClose><MdClose size={20} /></BookTabClose></BookTab>
                <About><Fit w={45}>About</Fit></About>
                <Logo><Fit w={102}>Hueber</Fit></Logo>
              </AppHeader>
              <ToolBar>
                <Tool $gap={8} $w={30}><svg width="6" height="20"><g fill="#1465a4"><circle cx="3" cy="3" r="2.500" /><circle cx="3" cy="10" r="2.500" /><circle cx="3" cy="17" r="2.500" /></g></svg></Tool>
                <Tool $gap={47} $w={30}><MdFindInPage size={29} /></Tool>
                <Tool $gap={11} $w={30}><MdArrowUpward size={28} /></Tool>
                <Tool $gap={6} $w={30}><MdArrowDownward size={28} /></Tool>
                <Field $gap={6} $w={65} $right><Fit w={16}>66</Fit></Field>
                <PageCount><Fit w={73}>(66 von 72)</Fit></PageCount>
                <Tool $gap={229} $w={30}><Marker /></Tool>
                <Tool $gap={27} $w={30}><MdInsertComment size={29} /></Tool>
                <Tool $gap={27} $w={30} $flip><MdFormatSize size={29} /></Tool>
                <Tool $gap={28} $w={30}><TextBox /></Tool>
                <Tool $gap={28} $w={30}><MdEdit size={28} /></Tool>
                <Tool $gap={27} $w={30}><MdVisibilityOff size={29} /></Tool>
                <Tool $gap={28} $w={30}><TrashX /></Tool>
                <Spacer />
                <Tool $gap={0} $w={24}><BookSplit /></Tool>
                <Tool $gap={13} $w={30}><MdZoomOut size={28} /></Tool>
                <Tool $gap={6} $w={30}><MdZoomIn size={28} /></Tool>
                <Field $gap={7} $w={176}><Fit w={34}>110%</Fit></Field>
                <Tool $gap={9} $w={30}><MdFullscreen size={30} /></Tool>
                <Tool $gap={5} $w={1} />
              </ToolBar>
              <Viewer>
                <Gutter />
                <Worksheet />
                <GutterRight />
                <Scroll><ScrollArrow $up $mt={9} /><Thumb /><ScrollArrow $mt={63} /></Scroll>
              </Viewer>
            </AppWindow>
          </Dark>
        </Stage>
      </Browser>

      <InfoButton>
        <svg width="19" height="19" viewBox="0 0 19 19" fill="none" stroke="#000" strokeWidth="1.600"><circle cx="9.500" cy="9.500" r="8.200" /><path d="M8 8.200h1.800v5M7.500 13.300h4.200M9.300 5v1.500" strokeWidth="1.300" /></svg>
      </InfoButton>
      <SharePill><Fit w={383}>Anzeigen der Anwendung von Simone …</Fit></SharePill>
      <Speaking>
        <svg width="18" height="15" viewBox="0 0 18 15" fill="none" stroke="#fff" strokeWidth="1.600"><path d="M1 0v15M18 7.500H5M10 2 4.500 7.500 10 13" /></svg>
        <Fit w={208}>Es spricht: Naweiluo Zhou</Fit>
      </Speaking>
      <ViewPill>
        <svg width="16" height="16" viewBox="0 0 16 16" fill="none" stroke="#000" strokeWidth="2"><path d="M8 1h7v6M1 9v6h7" /></svg>
        <svg width="16" height="16" viewBox="0 0 16 16" fill="none" stroke="#000" strokeWidth="1.600"><circle cx="7" cy="7" r="6" /><path d="m11.300 11.300 4 4M4 7h6M7 4v6" /></svg>
        <svg width="16" height="16" viewBox="0 0 16 16" fill="none" stroke="#000" strokeWidth="1.600"><circle cx="7" cy="7" r="6" /><path d="m11.300 11.300 4 4M4 7h6" /></svg>
        <svg width="16" height="16" viewBox="0 0 16 16" fill="none" stroke="#aaa" strokeWidth="1.500"><path d="M1 6V1h5M1 1l5 5M10 1h5v5M15 1l-5 5M1 10v5h5M1 15l5-5M15 10v5h-5M15 15l-5-5" /></svg>
      </ViewPill>
      <MicButton>
        <svg width="26" height="31" viewBox="0 0 26 31" fill="none" stroke="#f64c34" strokeWidth="1.600"><rect x="7" y="1.500" width="12" height="24" rx="6" /><path d="M13 25.500v4M8.500 30h9M25 1 1 26" /></svg>
      </MicButton>
    </Desktop>
  );
}
